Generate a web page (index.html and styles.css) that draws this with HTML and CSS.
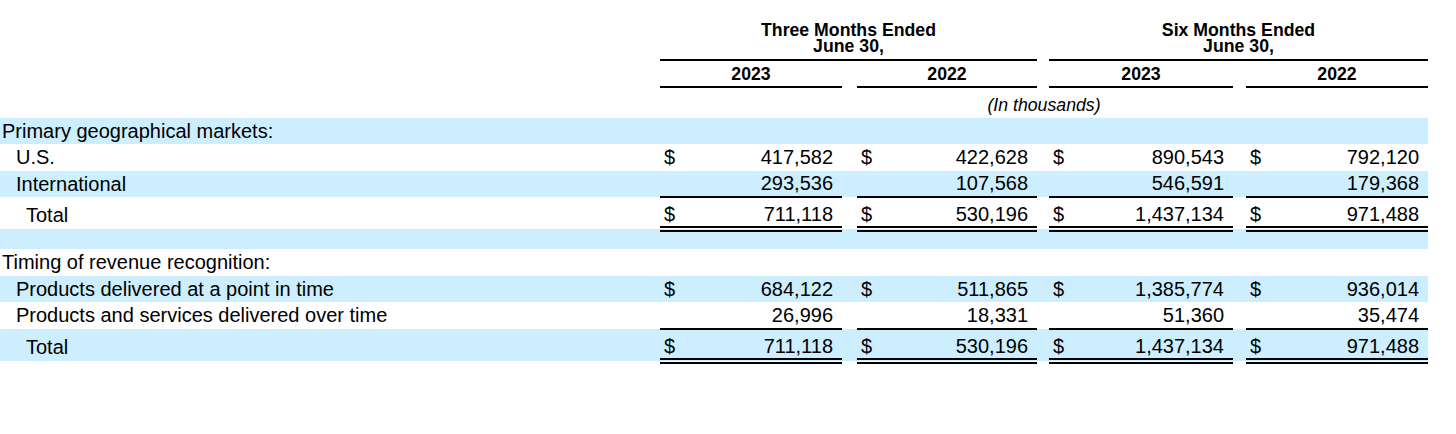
FILE: index.html
```html
<!DOCTYPE html>
<html lang="en">
<head>
<meta charset="utf-8">
<title>Disaggregated revenue</title>
<link rel="stylesheet" href="styles.css">
</head>
<body>
<table class="rev">
  <colgroup>
    <col class="c-label">
    <col class="c-cur"><col class="c-n1">
    <col class="c-sp1">
    <col class="c-cur"><col class="c-n2">
    <col class="c-sp2">
    <col class="c-cur"><col class="c-n3">
    <col class="c-sp3">
    <col class="c-cur"><col class="c-n4">
  </colgroup>
  <tr class="hdr1">
    <td></td>
    <td colspan="5" class="period"><div class="period-line">Three Months Ended</div><div class="period-line">June 30,</div></td>
    <td></td>
    <td colspan="5" class="period"><div class="period-line">Six Months Ended</div><div class="period-line">June 30,</div></td>
  </tr>
  <tr class="hdr2">
    <td></td>
    <td colspan="2" class="year">2023</td>
    <td></td>
    <td colspan="2" class="year">2022</td>
    <td></td>
    <td colspan="2" class="year">2023</td>
    <td></td>
    <td colspan="2" class="year">2022</td>
  </tr>
  <tr class="hdr3">
    <td></td>
    <td colspan="11" class="units">(In thousands)</td>
  </tr>
  <tr class="band r-sec">
    <td class="lbl lbl-sec">Primary geographical markets:</td>
    <td colspan="11"></td>
  </tr>
  <tr class="r-item">
    <td class="lbl lbl-item">U.S.</td>
    <td class="cur">$</td><td class="num">417,582</td><td></td>
    <td class="cur">$</td><td class="num">422,628</td><td></td>
    <td class="cur">$</td><td class="num">890,543</td><td></td>
    <td class="cur">$</td><td class="num">792,120</td>
  </tr>
  <tr class="band r-item">
    <td class="lbl lbl-item">International</td>
    <td class="cur"></td><td class="num">293,536</td><td></td>
    <td class="cur"></td><td class="num">107,568</td><td></td>
    <td class="cur"></td><td class="num">546,591</td><td></td>
    <td class="cur"></td><td class="num">179,368</td>
  </tr>
  <tr class="r-total">
    <td class="lbl lbl-total">Total</td>
    <td class="cur tot">$</td><td class="num tot">711,118</td><td></td>
    <td class="cur tot">$</td><td class="num tot">530,196</td><td></td>
    <td class="cur tot">$</td><td class="num tot">1,437,134</td><td></td>
    <td class="cur tot">$</td><td class="num tot">971,488</td>
  </tr>
  <tr class="band r-gap">
    <td></td>
    <td colspan="11"></td>
  </tr>
  <tr class="r-sec">
    <td class="lbl lbl-sec">Timing of revenue recognition:</td>
    <td colspan="11"></td>
  </tr>
  <tr class="band r-item">
    <td class="lbl lbl-item">Products delivered at a point in time</td>
    <td class="cur">$</td><td class="num">684,122</td><td></td>
    <td class="cur">$</td><td class="num">511,865</td><td></td>
    <td class="cur">$</td><td class="num">1,385,774</td><td></td>
    <td class="cur">$</td><td class="num">936,014</td>
  </tr>
  <tr class="r-item">
    <td class="lbl lbl-item">Products and services delivered over time</td>
    <td class="cur"></td><td class="num">26,996</td><td></td>
    <td class="cur"></td><td class="num">18,331</td><td></td>
    <td class="cur"></td><td class="num">51,360</td><td></td>
    <td class="cur"></td><td class="num">35,474</td>
  </tr>
  <tr class="band r-total">
    <td class="lbl lbl-total">Total</td>
    <td class="cur tot">$</td><td class="num tot">711,118</td><td></td>
    <td class="cur tot">$</td><td class="num tot">530,196</td><td></td>
    <td class="cur tot">$</td><td class="num tot">1,437,134</td><td></td>
    <td class="cur tot">$</td><td class="num tot">971,488</td>
  </tr>
</table>
</body>
</html>
```

FILE: styles.css
```css
html, body {
  margin: 0;
  padding: 0;
  background: #ffffff;
}

body {
  font-family: "Liberation Sans", Arial, sans-serif;
  color: #000000;
}

.rev {
  table-layout: fixed;
  width: 1428px;
  border-collapse: collapse;
  border-spacing: 0;
  font-size: 20px;
}

.rev td {
  padding: 0;
  white-space: nowrap;
  vertical-align: middle;
}

.c-label { width: 660px; }
.c-cur { width: 30px; }
.c-n1 { width: 152px; }
.c-n2 { width: 150px; }
.c-n3 { width: 154px; }
.c-n4 { width: 152px; }
.c-sp1 { width: 15px; }
.c-sp2 { width: 12px; }
.c-sp3 { width: 13px; }

/* header */
.hdr1 { height: 60px; }
.hdr2 { height: 27px; }
.hdr3 { height: 31px; }

.rev .period {
  font-size: 17.7px;
  font-weight: bold;
  text-align: center;
  vertical-align: top;
  padding-top: 22px;
  border-bottom: 2px solid #000;
}

.period-line {
  height: 16px;
  line-height: 16px;
}

.rev .year {
  font-size: 17.7px;
  font-weight: bold;
  text-align: center;
  padding-top: 2px;
  border-bottom: 2px solid #000;
}

.rev .units {
  font-size: 17.7px;
  font-style: italic;
  text-align: center;
  padding-top: 4px;
}

/* body rows */
.band td { background: #cceeff; }

.r-sec { height: 27px; }
.band.r-sec { height: 26px; }
.r-item { height: 27px; }
.band.r-item { height: 26px; }
.r-total { height: 32px; }
.r-gap { height: 20px; }

.rev .r-total td { padding-top: 4px; }

.rev .lbl-sec { padding-left: 2px; }
.rev .lbl-item { padding-left: 16px; }
.rev .lbl-total { padding-left: 26px; }

.rev .cur {
  padding-left: 4px;
  text-align: left;
}

.rev .num {
  text-align: right;
  padding-right: 9px;
}

.tot {
  border-top: 2px solid #000;
  border-bottom: 6px double #000;
}
```
